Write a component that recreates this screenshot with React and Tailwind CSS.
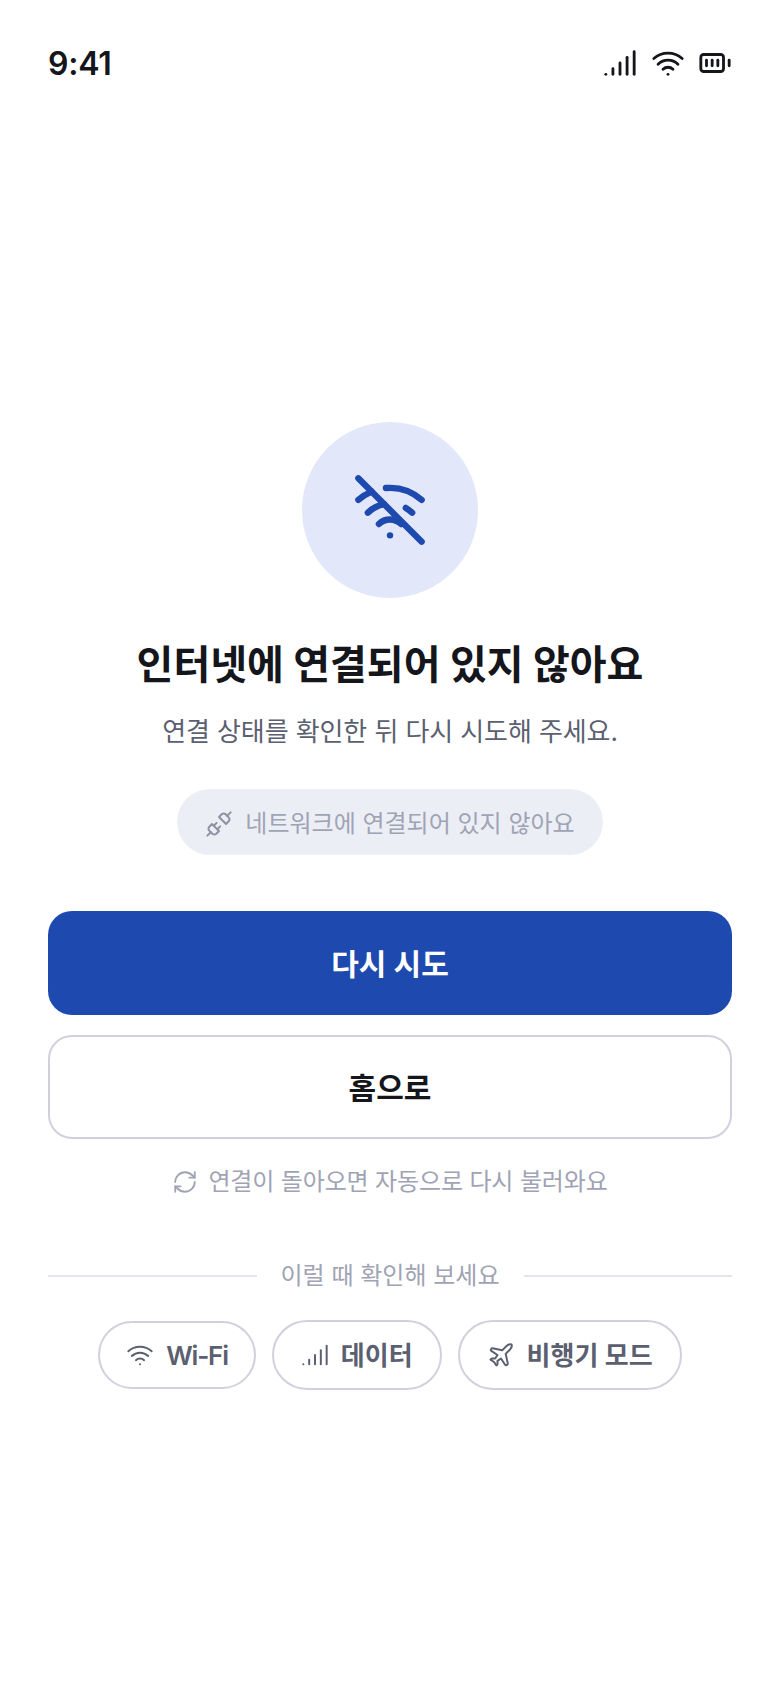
import React from 'react';
import { WifiOff, Wifi, Signal, BatteryFull, Unplug, RefreshCw, Plane } from 'lucide-react';

function Chip({ icon: Icon, label, className }) {
  return (
    <button className={`flex items-center gap-3 rounded-full border-2 border-[#d0d1dd] bg-white text-[#5b6070] text-[26px] font-semibold ${className}`}>
      <Icon size={28} strokeWidth={1.7} />
      <span>{label}</span>
    </button>
  );
}

export default function App() {
  return (
    <div className="w-[780px] h-[1688px] bg-white flex flex-col font-['Inter','Noto_Sans_CJK_KR',sans-serif]">
      {/* status bar */}
      <div className="h-[34px] mt-[46px] px-[48px] flex items-center justify-between text-[#14161c]">
        <span className="pt-[2px] text-[32px] leading-none font-semibold tracking-[-0.25px]">9:41</span>
        <div className="flex items-center gap-[13px]">
          <Signal size={34} strokeWidth={2} className="mr-[1px]" />
          <Wifi size={34} strokeWidth={2} />
          <BatteryFull size={34} strokeWidth={2} />
        </div>
      </div>

      <div className="mt-[342px] px-[48px] flex flex-col items-center">
        <div className="w-[176px] h-[176px] rounded-full bg-[#e2e8f9] flex items-center justify-center text-[#1e49ae]">
          <WifiOff size={76} strokeWidth={2} />
        </div>

        <h1 className="mt-[41px] text-[40px] leading-[52px] font-bold text-[#14161c]">
          인터넷에 연결되어 있지 않아요
        </h1>
        <p className="mt-[22px] text-[26px] leading-[38px] text-[#5b6070] tracking-[-0.1px]">
          연결 상태를 확인한 뒤 다시 시도해 주세요.
        </p>

        <div className="mt-[38px] h-[66px] px-[28px] pt-[3px] flex items-center gap-3 rounded-full bg-[#eceef6] text-[#a0a3b4] text-[24px]">
          <Unplug size={28} strokeWidth={1.7} className="text-[#8f92a3]" />
          <span>네트워크에 연결되어 있지 않아요</span>
        </div>

        <button className="mt-[56px] pt-[3px] w-full h-[104px] rounded-[24px] bg-[#1e49ae] text-white text-[30px] font-bold">
          다시 시도
        </button>
        <button className="mt-[20px] pt-[3px] w-full h-[104px] rounded-[24px] border-2 border-[#d0d1dd] bg-white text-[#14161c] text-[30px] font-bold">
          홈으로
        </button>

        <div className="mt-[26px] h-[34px] flex items-center gap-[10px] text-[#a0a3b4] text-[24px] tracking-[-0.15px]">
          <RefreshCw size={26} strokeWidth={1.7} />
          <span>연결이 돌아오면 자동으로 다시 불러와요</span>
        </div>

        <div className="mt-[60px] w-full flex items-center gap-6 text-[#a0a3b4] text-[24px]">
          <div className="flex-1 h-[2px] bg-[#e3e4ec]"></div>
          <span className="leading-[34px]">이럴 때 확인해 보세요</span>
          <div className="flex-1 h-[2px] bg-[#e3e4ec]"></div>
        </div>

        <div className="mt-[27px] flex items-center gap-4">
          <Chip icon={Wifi} label="Wi-Fi" className="h-[68px] px-[26px] tracking-[-1.2px]" />
          <Chip icon={Signal} label="데이터" className="h-[70px] px-[27px]" />
          <Chip icon={Plane} label="비행기 모드" className="h-[70px] px-[27px]" />
        </div>
      </div>
    </div>
  );
}
